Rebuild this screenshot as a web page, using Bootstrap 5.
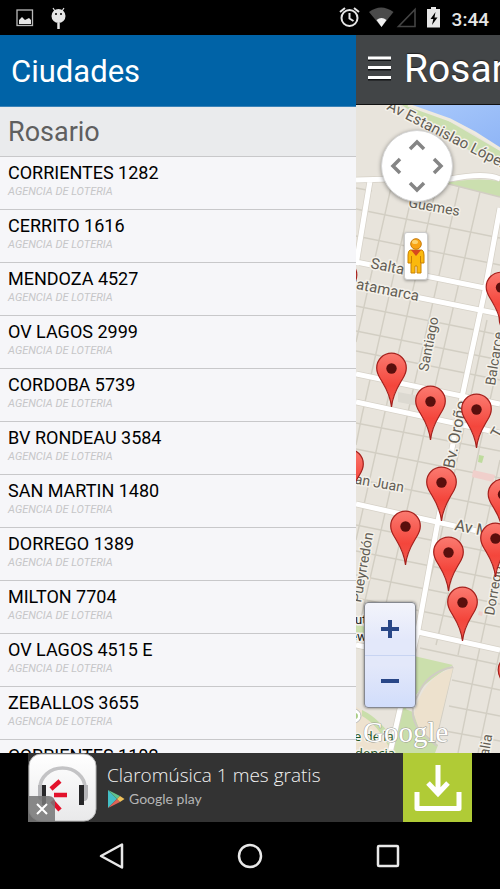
<!DOCTYPE html>
<html lang="es">
<head>
<meta charset="utf-8">
<meta name="viewport" content="width=device-width, initial-scale=1">
<title>Ciudades</title>
<link href="https://cdn.jsdelivr.net/npm/bootstrap@5.3.0/dist/css/bootstrap.min.css" rel="stylesheet">
<style>
body{font-family:Roboto,"Noto Sans",sans-serif;background:#000}
.status-bar{height:35px;color:#e6e6e6;font-size:19px;font-weight:500;padding-left:16px;padding-right:11px}
.map-pane{width:144px}
.drawer-head{height:72px;background:#0063a7;border-bottom:1px solid #3b83b8;font-size:31px;font-weight:400;padding:2px 0 0 11px;line-height:1}
.city-head{height:50px;background:#eaebed;color:#5f5f5f;border-bottom:1px solid #c8c8ca;font-size:27px;font-weight:400;line-height:51px;padding-left:8px}
.drawer{background:#f6f6f9}
.agency{height:53px;border-bottom:1px solid #c8c8ca;padding:6px 8px 0;color:#000;text-decoration:none}
.agency-name{font-size:18px;line-height:20px}
.agency-kind{font-size:11px;line-height:18px;font-style:italic;color:#c6c6c8}
.map-head{height:70px;background:#424547;border-bottom:1px solid #111;padding-left:11px;gap:12px}
.map-title{font-size:39px;font-weight:400;line-height:1;text-shadow:0 -1px 1px #222}
.map-svg text{font-family:Roboto,sans-serif;fill:#625d54;stroke:#f4f1ea;stroke-width:3px;stroke-linejoin:round;paint-order:stroke}
.map-svg .park-label{fill:#1d5425;font-family:"Open Sans",sans-serif}
.map-svg .dark-label{fill:#222}
.map-svg .watermark{font-family:"Liberation Serif",serif;fill:#fff;stroke:#9b9b94;stroke-width:1px}
.pan-control{top:25px;left:25px;width:72px;height:72px;background:#fff;border:1px solid #d5d5d5;box-shadow:0 1px 4px #0006;display:grid;grid-template-columns:repeat(3,1fr);grid-template-rows:repeat(3,1fr);padding:3px}
.plain-btn{background:none;border:0;padding:0;display:flex;align-items:center;justify-content:center}
.pan-up,.pan-down{grid-column:2}
.pan-left{grid-column:1;grid-row:2}
.pan-right{grid-column:3;grid-row:2}
.pan-up{grid-row:1}.pan-down{grid-row:3}
.street-btn{top:127px;left:48px;width:24px;height:48px;background:#fff;border:1px solid #ccc;border-radius:3px;box-shadow:0 1px 3px #0005}
.zoom-control{left:8px;top:497px;width:52px;height:106px;border:1px solid #85888f;border-radius:4px;background:linear-gradient(#f3f4fb,#e3e8fa 35%,#e3e8fa 60%,#d1ddfb);box-shadow:0 0 3px #0008}
.zoom-control .plain-btn{flex:1}
.zoom-control .plain-btn+.plain-btn{border-top:1px solid #c8d4f2}
.ad-bar{height:69px;padding:0 28px}
.ad-body{background:#333;color:#f2f2f2}
.ad-icon{width:69px;height:69px}
.ad-text{font-family:"Open Sans",sans-serif;font-weight:300;font-size:19px;line-height:24px;padding:10px 0 0 10px}
.play-name{font-family:Lato,sans-serif;font-weight:400;font-size:14px;line-height:24px;color:#b5b5b5}
.ad-get{width:69px;background:#b0cb36}
.ad-close{left:0;bottom:0;width:27px;height:26px;background:#777d;border-radius:0 6px 0 0}
.sys-nav{height:67px;gap:96px}
.sys-nav .plain-btn{width:42px}
</style>
<script src="https://cdn.jsdelivr.net/npm/bootstrap@5.3.0/dist/js/bootstrap.bundle.min.js"></script>
</head>
<body class="vh-100 overflow-hidden d-flex flex-column">
<header class="status-bar d-flex align-items-center flex-shrink-0">
<svg width="18" height="18" viewBox="0 0 18 18" aria-hidden="true"><rect x="1" y="1" width="15.500" height="15.500" fill="none" stroke="#b9b9b9" stroke-width="1.300"/><path d="M3 15V11L6 8 9 11 13 9 15 11V15Z" fill="#e6e6e6"/></svg>
<svg class="ms-3" width="18" height="24" viewBox="0 0 18 24" aria-hidden="true"><path d="M3 2 5 5M14 2 12 5" stroke="#e6e6e6" stroke-width="1.200"/><ellipse cx="8.500" cy="10" rx="7" ry="7" fill="#e6e6e6"/><path d="M8.500 17V23" stroke="#e6e6e6" stroke-width="2.500"/><circle cx="6" cy="8" r="1" fill="#000"/><circle cx="11" cy="8" r="1" fill="#000"/></svg>
<div class="ms-auto d-flex align-items-center">
<svg width="102" height="24" viewBox="338 6 102 24" aria-hidden="true"><circle cx="349.500" cy="18" r="8" fill="none" stroke="#e6e6e6" stroke-width="2"/><path d="M349.500 13V18.500L353.500 21M340 12 345 8M359 12 354 8" fill="none" stroke="#e6e6e6" stroke-width="2"/><path d="M369 12Q381 3 393.500 12L381.500 27Z" fill="#4a4a4a"/><path d="M376.500 20Q381.500 16 386.500 20L381.500 27Z" fill="#f0f0f0"/><path d="M398.500 26.500H415V9.500Z" fill="none" stroke="#444" stroke-width="1.600"/><path d="M427 9H431V7H436V9H440.500V27.500H427Z" fill="#e6e6e6"/><path d="M435.500 12 430.500 19H433.300L432 25 437.500 17.500H434.500Z" fill="#000"/></svg>
<span class="ps-2 ms-1 pt-1 lh-1">3:44</span>
</div>
</header>

<main class="d-flex flex-grow-1 overflow-hidden">
<aside class="drawer flex-grow-1 overflow-hidden">
<h1 class="drawer-head text-white d-flex align-items-center m-0">Ciudades</h1>
<h2 class="city-head m-0">Rosario</h2>
<nav aria-label="Agencias">
<a href="#" class="agency d-block"><div class="agency-name">CORRIENTES 1282</div><div class="agency-kind">AGENCIA DE LOTERIA</div></a>
<a href="#" class="agency d-block"><div class="agency-name">CERRITO 1616</div><div class="agency-kind">AGENCIA DE LOTERIA</div></a>
<a href="#" class="agency d-block"><div class="agency-name">MENDOZA 4527</div><div class="agency-kind">AGENCIA DE LOTERIA</div></a>
<a href="#" class="agency d-block"><div class="agency-name">OV LAGOS 2999</div><div class="agency-kind">AGENCIA DE LOTERIA</div></a>
<a href="#" class="agency d-block"><div class="agency-name">CORDOBA 5739</div><div class="agency-kind">AGENCIA DE LOTERIA</div></a>
<a href="#" class="agency d-block"><div class="agency-name">BV RONDEAU 3584</div><div class="agency-kind">AGENCIA DE LOTERIA</div></a>
<a href="#" class="agency d-block"><div class="agency-name">SAN MARTIN 1480</div><div class="agency-kind">AGENCIA DE LOTERIA</div></a>
<a href="#" class="agency d-block"><div class="agency-name">DORREGO 1389</div><div class="agency-kind">AGENCIA DE LOTERIA</div></a>
<a href="#" class="agency d-block"><div class="agency-name">MILTON 7704</div><div class="agency-kind">AGENCIA DE LOTERIA</div></a>
<a href="#" class="agency d-block"><div class="agency-name">OV LAGOS 4515 E</div><div class="agency-kind">AGENCIA DE LOTERIA</div></a>
<a href="#" class="agency d-block"><div class="agency-name">ZEBALLOS 3655</div><div class="agency-kind">AGENCIA DE LOTERIA</div></a>
<a href="#" class="agency d-block"><div class="agency-name">CORRIENTES 1102</div><div class="agency-kind">AGENCIA DE LOTERIA</div></a>
</nav>
</aside>

<section class="map-pane flex-shrink-0 d-flex flex-column overflow-hidden" aria-label="Mapa">
<div class="map-head d-flex align-items-center flex-shrink-0 overflow-hidden">
<button class="plain-btn flex-shrink-0" aria-label="Menú"><svg width="25" height="30" viewBox="0 0 25 30"><path d="M1 4.500H24M1 14H24M1 24H24" stroke="#101214" stroke-width="3"/><path d="M1 3H24M1 12.500H24M1 22.500H24" stroke="#fff" stroke-width="3"/></svg></button>
<span class="map-title text-white">Rosario</span>
</div>
<div class="position-relative flex-grow-1 overflow-hidden">
<svg class="map-svg d-block w-100 h-100" viewBox="356 105 144 648" preserveAspectRatio="xMinYMin slice" role="img" aria-label="Mapa de Rosario">
<defs>
<linearGradient id="pinFill" x1="0" y1="0" x2="0" y2="1"><stop offset="0" stop-color="#fb7a70"/><stop offset=".6" stop-color="#f4463c"/><stop offset="1" stop-color="#f0564b"/></linearGradient>
<linearGradient id="river" x1="0" y1="0" x2="1" y2="1"><stop offset="0" stop-color="#a9c9fb"/><stop offset="1" stop-color="#8fb5f6"/></linearGradient>
<g id="pin"><path d="M0 0C-1.500-14-7-21-11-28C-13.500-32-14.800-35-14.800-39A14.800 14.800 0 0 1 14.800-39C14.800-35 13.500-32 11-28C7-21 1.500-14 0 0Z" fill="url(#pinFill)" stroke="#a5201c" stroke-width="1.200"/><circle cy="-38.500" r="5.200" fill="#5a0f0d"/></g>
</defs>
<rect x="356" y="105" width="144" height="648" fill="#e8e4dc"/>
<path d="M402 105H420L452 123 500 151V168L460 145Z" fill="#cbdfb0"/>
<path d="M408 105 450 120 475 133 500 149V105Z" fill="url(#river)"/>
<path d="M408 105 450 120 475 133 500 149" fill="none" stroke="#eeeae0" stroke-width="3"/>
<path d="M443 183Q475 177 500 181V197Z" fill="#cbdfaf"/>
<g fill="none" stroke="#d2cec3" stroke-width="1.400">
<path d="M356 188 372 191M356 209 500 238M356 236 500 265M445 183 500 197M356 306 500 335M356 331 500 360M356 351 500 380M356 423 500 451M356 449 500 478M356 479 500 508M356 525 500 554M356 551 500 580M356 575 500 604M356 598 500 627M420 648 500 665M452 680 500 690M449 706 500 716M445 731 500 741"/>
<path d="M392 183 356 342M414 186 362 415 356 445M437 184 382 425 356 540M459 187 404 430 356 640M480 192 424 434 370 675M487 320 440 540 420 620M500 355 480 445 456 560 436 645M500 460 458 655M500 555 475 670 458 753M453 667 433 753M500 650 478 753"/>
</g>
<path d="M398 392 419 396 418 406 398 402Z" fill="#dcd9d1"/>
<path d="M473 470 495 475 493 482 472 477Z" fill="#f0cfcb"/><path d="M479 455 484 456 482 463 478 462Z" fill="#bedb9d"/>
<path d="M356 625 372 628 370 634 356 632Z" fill="#cbdfae"/><path d="M479 611 483 612 482 616 478 615Z" fill="#f0cfcb"/>
<path d="M414 656 453 665Q428 680 419 691L400 717Z" fill="#cbdfac"/>
<path d="M453 668 434 746 418 728 414 713Q424 676 453 668Z" fill="#ede1cd"/>
<path d="M400 707 413 712 419 729 438 745 435 753H391Z" fill="#c9deaa"/>
<path d="M356 707Q374 716 392 745L390 753H356Z" fill="#eee2cf"/><path d="M362 710Q381 719 397 745L389 747Q377 724 362 716Z" fill="#c9deaa"/>
<path d="M453 667Q427 672 418 695Q407 712 419 730L437 746" fill="none" stroke="#d0ccc4" stroke-width="2"/>
<g fill="none" stroke="#d6d1c7" stroke-width="6.500"><path d="M356 180Q410 178 450 179 485 172 500 179M370 181 356 265M500 208 485 290 462 397 438 521 418 630 390 753M356 262 500 291M356 285 500 314M356 374 500 404M356 402 500 433M356 504 500 536M418 632 500 650M356 645 370 648"/></g>
<g fill="none" stroke="#fff" stroke-width="5"><path d="M356 180Q410 178 450 179 485 172 500 179M370 181 356 265M500 208 485 290 462 397 438 521 418 630 390 753M356 262 500 291M356 285 500 314M356 374 500 404M356 402 500 433M356 504 500 536M418 632 500 650M356 645 370 648"/></g>
<text font-size="15" transform="translate(386 109) rotate(27)">Av Estanislao López</text>
<text font-size="14" transform="translate(408 207) rotate(10)">Güemes</text>
<text font-size="15" transform="translate(370 268) rotate(11)">Salta</text>
<text font-size="15" transform="translate(346 287) rotate(11)">Catamarca</text>
<text font-size="14" transform="translate(428 372) rotate(-79)">Santiago</text>
<text font-size="14" transform="translate(495 386) rotate(-81)">Balcarce</text>
<text font-size="16" transform="translate(454 469) rotate(-79)">Bv. Oroño</text>
<text font-size="14" transform="translate(346 482) rotate(10)">San Juan</text>
<text font-size="16" transform="translate(454 530) rotate(11)">Av Mendoza</text>
<text font-size="15" transform="translate(499 439) rotate(-60)">T</text>
<text font-size="14" transform="translate(361 603) rotate(-80)">Pueyrredón</text>
<text font-size="14" transform="translate(494 616) rotate(-80)">Dorrego</text>
<text font-size="14" transform="translate(487 765) rotate(-80)">Italia</text>
<text class="dark-label" font-size="13" x="355" y="624">ut</text>
<text class="dark-label" font-size="13" x="350" y="641">ew</text>
<circle cx="354" cy="716" r="7" fill="#fff" stroke="#bbb"/><circle cx="355" cy="716" r="3" fill="#a9cd86"/>
<text class="park-label" font-size="13" x="354" y="741">e de la</text>
<text class="park-label" font-size="13" x="355" y="758">dencia</text>
<text class="watermark" font-size="29" x="363" y="742">Google</text>
<use href="#pin" x="342" y="314"/><use href="#pin" x="514" y="358"/><use href="#pin" x="501" y="326"/>
<use href="#pin" x="391.500" y="407"/><use href="#pin" x="430.500" y="440"/><use href="#pin" x="476.500" y="448"/>
<use href="#pin" x="348.500" y="503"/><use href="#pin" x="441.500" y="521"/><use href="#pin" x="503" y="533"/>
<use href="#pin" x="405.500" y="565"/><use href="#pin" x="495.500" y="577"/><use href="#pin" x="448.500" y="591"/>
<use href="#pin" x="462.500" y="641"/><use href="#pin" x="513" y="709"/>
</svg>
<div class="pan-control position-absolute rounded-circle">
<button class="plain-btn pan-up" aria-label="Arriba"><svg width="18" height="12" viewBox="0 0 18 12"><path d="M2 10 9 3 16 10" fill="none" stroke="#858585" stroke-width="3.500"/></svg></button>
<button class="plain-btn pan-left" aria-label="Izquierda"><svg width="12" height="18" viewBox="0 0 12 18"><path d="M10 2 3 9 10 16" fill="none" stroke="#858585" stroke-width="3.500"/></svg></button>
<button class="plain-btn pan-right" aria-label="Derecha"><svg width="12" height="18" viewBox="0 0 12 18"><path d="M2 2 9 9 2 16" fill="none" stroke="#858585" stroke-width="3.500"/></svg></button>
<button class="plain-btn pan-down" aria-label="Abajo"><svg width="18" height="12" viewBox="0 0 18 12"><path d="M2 2 9 9 16 2" fill="none" stroke="#858585" stroke-width="3.500"/></svg></button>
</div>
<button class="plain-btn street-btn position-absolute" aria-label="Street View"><svg width="18" height="38" viewBox="0 0 18 38"><path d="M3 13H15Q17 14 17 18V26H14V36H10V29H8V36H4V26H1V18Q1 14 3 13Z" fill="#fbb90d" stroke="#c98105"/><path d="M4 13H14L9 19Z" fill="#d6491f"/><path d="M4.500 19V26M13.500 19V26" stroke="#c98105"/><circle cx="9" cy="7" r="5.300" fill="#f9a414" stroke="#c67a08"/><ellipse cx="8" cy="5" rx="3" ry="2" fill="#fdd36c"/></svg></button>
<div class="zoom-control position-absolute d-flex flex-column">
<button class="plain-btn" aria-label="Acercar"><svg width="20" height="20" viewBox="0 0 20 20"><path d="M1 10H19M10 1V19" stroke="#294787" stroke-width="4"/></svg></button>
<button class="plain-btn" aria-label="Alejar"><svg width="20" height="20" viewBox="0 0 20 20"><path d="M1 10H19" stroke="#294787" stroke-width="4"/></svg></button>
</div>
</div>
</section>
</main>

<section class="ad-bar d-flex flex-shrink-0" aria-label="Anuncio">
<div class="ad-body d-flex flex-grow-1">
<div class="ad-icon position-relative flex-shrink-0">
<svg width="69" height="69" viewBox="0 0 69 69" aria-hidden="true"><defs><linearGradient id="tile" x1="0" y1="0" x2="0" y2="1"><stop offset="0" stop-color="#fff"/><stop offset="1" stop-color="#e9e9ea"/></linearGradient></defs><rect x="1" y="1" width="67" height="67" rx="12" fill="url(#tile)" stroke="#b8b8b8"/><path d="M12 40V35A22.500 20 0 0 1 57 35V40" fill="none" stroke="#c3c3c5" stroke-width="3.500"/><path d="M10 32H14V48Q10 47 10 43ZM56 32H60V43Q60 48 56 48Z" fill="#b5b5b8"/><path d="M14 32H18V52H14ZM51 32H56V52H51Z" fill="#272729"/><path d="M23 36 32 28M26 42H39M24 48 32 57" stroke="#e3122b" stroke-width="4.500"/></svg>
<button class="plain-btn ad-close position-absolute" aria-label="Cerrar anuncio"><svg width="14" height="14" viewBox="0 0 14 14"><path d="M2 2 12 12M12 2 2 12" stroke="#fff" stroke-width="2"/></svg></button>
</div>
<div class="ad-text">
<div>Claromúsica 1 mes gratis</div>
<div class="d-flex align-items-center play-name gap-1"><svg width="18" height="20" viewBox="0 0 18 20" aria-hidden="true"><path d="M1 1V19L10 10Z" fill="#43bfc6"/><path d="M1 1 13 7 10 10Z" fill="#62c28c"/><path d="M1 19 13 13 10 10Z" fill="#df6155"/><path d="M13 7 17.500 10 13 13 10 10Z" fill="#f0c15b"/></svg><span>Google play</span></div>
</div>
</div>
<button class="plain-btn ad-get flex-shrink-0" aria-label="Descargar"><svg width="48" height="48" viewBox="0 0 48 48"><path d="M3 28V44.500H45V28" fill="none" stroke="#fff" stroke-width="5" stroke-linejoin="round"/><path d="M24 1V30M14 19 24 29.500 34 19" fill="none" stroke="#fff" stroke-width="5"/></svg></button>
</section>

<nav class="sys-nav d-flex align-items-center justify-content-center flex-shrink-0" aria-label="Sistema">
<button class="plain-btn" aria-label="Atrás"><svg width="26" height="28" viewBox="0 0 26 28"><path d="M2 14 23 2.500V25.500Z" fill="none" stroke="#e8e8e8" stroke-width="2.500" stroke-linejoin="round"/></svg></button>
<button class="plain-btn" aria-label="Inicio"><svg width="26" height="26" viewBox="0 0 26 26"><circle cx="13" cy="13" r="11" fill="none" stroke="#e8e8e8" stroke-width="2.500"/></svg></button>
<button class="plain-btn" aria-label="Recientes"><svg width="26" height="26" viewBox="0 0 26 26"><rect x="3" y="3" width="20" height="20" rx="1" fill="none" stroke="#e8e8e8" stroke-width="2.500"/></svg></button>
</nav>
</body>
</html>
